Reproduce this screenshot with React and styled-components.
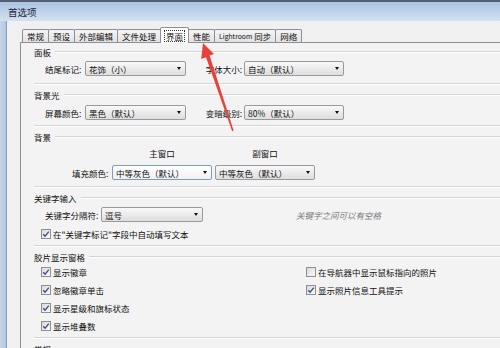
import React from 'react'
import styled, { createGlobalStyle } from 'styled-components'

const GlobalStyle = createGlobalStyle`
  html, body {
    margin: 0;
    padding: 0;
    width: 500px;
    height: 348px;
    overflow: hidden;
    background: #f0f0f0;
  }
  body {
    font-family: "Noto Sans CJK SC", "Noto Sans", sans-serif;
    font-size: 8.5px;
    color: #111;
  }
`

const Window = styled.div`
  position: relative;
  width: 500px;
  height: 348px;
  overflow: hidden;
  background: #f0f0f0;
  display: flex;
  flex-direction: column;
`

const TitleBar = styled.div`
  flex: none;
  height: 21px;
  box-sizing: border-box;
  border-top: 2px solid #566070;
  background: linear-gradient(#a9c3e1, #d4e2f2);
  display: flex;
  align-items: center;
  padding-left: 8px;
  font-size: 9.5px;
  color: #1b2533;
`

const Frame = styled.div`
  flex: 1;
  display: flex;
  min-height: 0;
`

const SideBorder = styled.div`
  flex: none;
  width: 6px;
  background: linear-gradient(90deg, #c5d6eb, #b3c7df);
  border-right: 1px solid #8e9eb3;
`

const Content = styled.div`
  flex: 1;
  min-width: 0;
  padding: 8px 0 0 13px;
  display: flex;
  flex-direction: column;
`

const TabStrip = styled.div`
  display: flex;
  align-items: flex-end;
  height: 13px;
  padding-left: 3px;
  position: relative;
  z-index: 1;
`

const Tab = styled.div`
  height: ${p => (p.$active ? 16 : 13)}px;
  margin-bottom: ${p => (p.$active ? -1 : 0)}px;
  margin-left: -1px;
  padding: 0 ${p => (p.$active ? 3 : 4)}px;
  box-sizing: border-box;
  border: 1px solid #8d8f95;
  border-bottom: none;
  border-radius: 2px 2px 0 0;
  background: ${p => (p.$active ? '#fff' : 'linear-gradient(#f4f4f4, #e2e2e2)')};
  display: flex;
  align-items: center;
  white-space: nowrap;
  line-height: 10px;
`

const Focus = styled.span`
  border: 1px dotted #333;
  padding: 0 1px;
  line-height: 10px;
`

const Latin = styled.span`
  font-size: 6.8px;
  margin-right: 2px;
`

const Panel = styled.div`
  flex: 1;
  border-top: 1px solid #8d8f95;
  border-left: 1px solid #8d8f95;
  background: #f3f3f3;
  padding: 4px 0 0 13px;
  display: flex;
  flex-direction: column;
  gap: 6px;
`

const Group = styled.section`
  border-bottom: 1px solid #d5d5d5;
  box-shadow: 0 1px 0 #fff;
`

const GroupHead = styled.div`
  display: flex;
  align-items: center;
  gap: 4px;
  height: 10px;
  line-height: 10px;
  &::after {
    content: '';
    flex: 1;
    border-top: 1px solid #d5d5d5;
    border-bottom: 1px solid #fff;
  }
`

const GroupBody = styled.div`
  padding: ${p => p.$pad};
  display: flex;
  flex-direction: column;
  gap: ${p => p.$gap || 0}px;
`

const Row = styled.div`
  display: flex;
  align-items: center;
  height: ${p => p.$h || 15}px;
  padding-left: ${p => p.$indent || 0}px;
`

const Label = styled.span`
  flex: none;
  width: ${p => p.$w}px;
  margin-right: ${p => p.$mr || 0}px;
  text-align: ${p => p.$align || 'left'};
  white-space: nowrap;
  line-height: 10px;
`

const Caption = styled.span`
  flex: none;
  width: ${p => p.$w}px;
  margin-right: ${p => p.$mr || 0}px;
  text-align: center;
  line-height: 10px;
`

const Combo = styled.div`
  flex: none;
  width: ${p => p.$w}px;
  height: 15px;
  margin-right: ${p => p.$mr || 0}px;
  box-sizing: border-box;
  border: 1px solid ${p => (p.$focus ? '#7a9cc4' : '#9a9a9a')};
  border-radius: 2px;
  background: ${p => (p.$focus ? 'linear-gradient(#ffffff, #f1f1f1)' : 'linear-gradient(#f8f8f8, #dedede)')};
  display: flex;
  align-items: center;
  padding: 0 4px 0 3px;
  line-height: 10px;
`

const ComboText = styled.span`
  flex: 1;
  white-space: nowrap;
  overflow: hidden;
`

const ComboArrow = styled.span`
  flex: none;
  width: 0;
  height: 0;
  border-left: 2.5px solid transparent;
  border-right: 2.5px solid transparent;
  border-top: 3px solid #111;
`

const Hint = styled.span`
  margin-left: ${p => p.$ml}px;
  color: #7d7d7d;
  font-style: italic;
  white-space: nowrap;
  line-height: 10px;
`

const CheckGrid = styled.div`
  display: grid;
  grid-template-columns: 265px auto;
  grid-auto-rows: 12px;
  row-gap: 6px;
`

const CheckRow = styled.label`
  display: flex;
  align-items: center;
  gap: 2px;
  white-space: nowrap;
  line-height: 10px;
`

const Box = styled.span`
  flex: none;
  width: 10px;
  height: 10px;
  box-sizing: border-box;
  border: 1px solid #8f8f8f;
  background: linear-gradient(135deg, #d9d9d9, #fbfbfb);
  display: flex;
  align-items: center;
  justify-content: center;
`

const Overlay = styled.svg`
  position: absolute;
  left: 0;
  top: 0;
  pointer-events: none;
`

function Select({ w, mr, focus, children }) {
  return (
    <Combo $w={w} $mr={mr} $focus={focus}>
      <ComboText>{children}</ComboText>
      <ComboArrow />
    </Combo>
  )
}

function Check({ checked = true, children }) {
  return (
    <CheckRow>
      <Box>
        {checked && (
          <svg width="8" height="8" viewBox="0 0 8 8">
            <path d="M1.2 4.2 L3.1 6.2 L6.8 1.6" fill="none" stroke="#3d5290" strokeWidth="1.4" />
          </svg>
        )}
      </Box>
      {children}
    </CheckRow>
  )
}

const tabs = ['常规', '预设', '外部编辑', '文件处理', '界面', '性能', 'Lightroom 同步', '网络']

export default function App() {
  return (
    <Window>
      <GlobalStyle />
      <TitleBar>首选项</TitleBar>
      <Frame>
        <SideBorder />
        <Content>
          <TabStrip>
            {tabs.map(t => (
              <Tab key={t} $active={t === '界面'}>
                {t === '界面' ? (
                  <Focus>{t}</Focus>
                ) : t.startsWith('Lightroom') ? (
                  <>
                    <Latin>Lightroom</Latin>同步
                  </>
                ) : (
                  t
                )}
              </Tab>
            ))}
          </TabStrip>
          <Panel>
            <Group>
              <GroupHead>面板</GroupHead>
              <GroupBody $pad="4px 0 7px 11px">
                <Row>
                  <Label $w={40}>结尾标记:</Label>
                  <Select w={101}>花饰（小）</Select>
                  <Label $w={56} $mr={2} $align="right">字体大小:</Label>
                  <Select w={100}>自动（默认）</Select>
                </Row>
              </GroupBody>
            </Group>

            <Group>
              <GroupHead>背景光</GroupHead>
              <GroupBody $pad="5px 0 5px 11px">
                <Row>
                  <Label $w={40}>屏幕颜色:</Label>
                  <Select w={101}>黑色（默认）</Select>
                  <Label $w={56} $mr={2} $align="right">变暗级别:</Label>
                  <Select w={100}>80%（默认）</Select>
                </Row>
              </GroupBody>
            </Group>

            <Group>
              <GroupHead>背景</GroupHead>
              <GroupBody $pad="6px 0 6px 38px" $gap={7}>
                <Row $h={10}>
                  <Label $w={40} />
                  <Caption $w={100} $mr={3}>主窗口</Caption>
                  <Caption $w={100}>副窗口</Caption>
                </Row>
                <Row>
                  <Label $w={40}>填充颜色:</Label>
                  <Select w={100} mr={3} focus>中等灰色（默认）</Select>
                  <Select w={100}>中等灰色（默认）</Select>
                </Row>
              </GroupBody>
            </Group>

            <Group>
              <GroupHead>关键字输入</GroupHead>
              <GroupBody $pad="4px 0 6px 7px" $gap={6}>
                <Row $indent={4}>
                  <Label $w={56}>关键字分隔符:</Label>
                  <Select w={102}>逗号</Select>
                  <Hint $ml={93}>关键字之间可以有空格</Hint>
                </Row>
                <Row $h={11}>
                  <Check>{'在"关键字标记"字段中自动填写文本'}</Check>
                </Row>
              </GroupBody>
            </Group>

            <Group>
              <GroupHead>胶片显示窗格</GroupHead>
              <GroupBody $pad="4px 0 5px 7px">
                <CheckGrid>
                  <Check>显示徽章</Check>
                  <Check checked={false}>在导航器中显示鼠标指向的照片</Check>
                  <Check>忽略徽章单击</Check>
                  <Check>显示照片信息工具提示</Check>
                  <Check>显示星级和旗标状态</Check>
                  <span />
                  <Check>显示堆叠数</Check>
                </CheckGrid>
              </GroupBody>
            </Group>

            <Group>
              <GroupHead>常规</GroupHead>
              <GroupBody $pad="20px 0 0 0" />
            </Group>
          </Panel>
        </Content>
      </Frame>

      <Overlay width="500" height="348" viewBox="0 0 500 348">
        <polygon
          points="203,43 214,54 209.6,55.6 233.6,130.6 232.2,131.2 206,57.2 201.2,59"
          fill="#e8413a"
        />
      </Overlay>
    </Window>
  )
}
